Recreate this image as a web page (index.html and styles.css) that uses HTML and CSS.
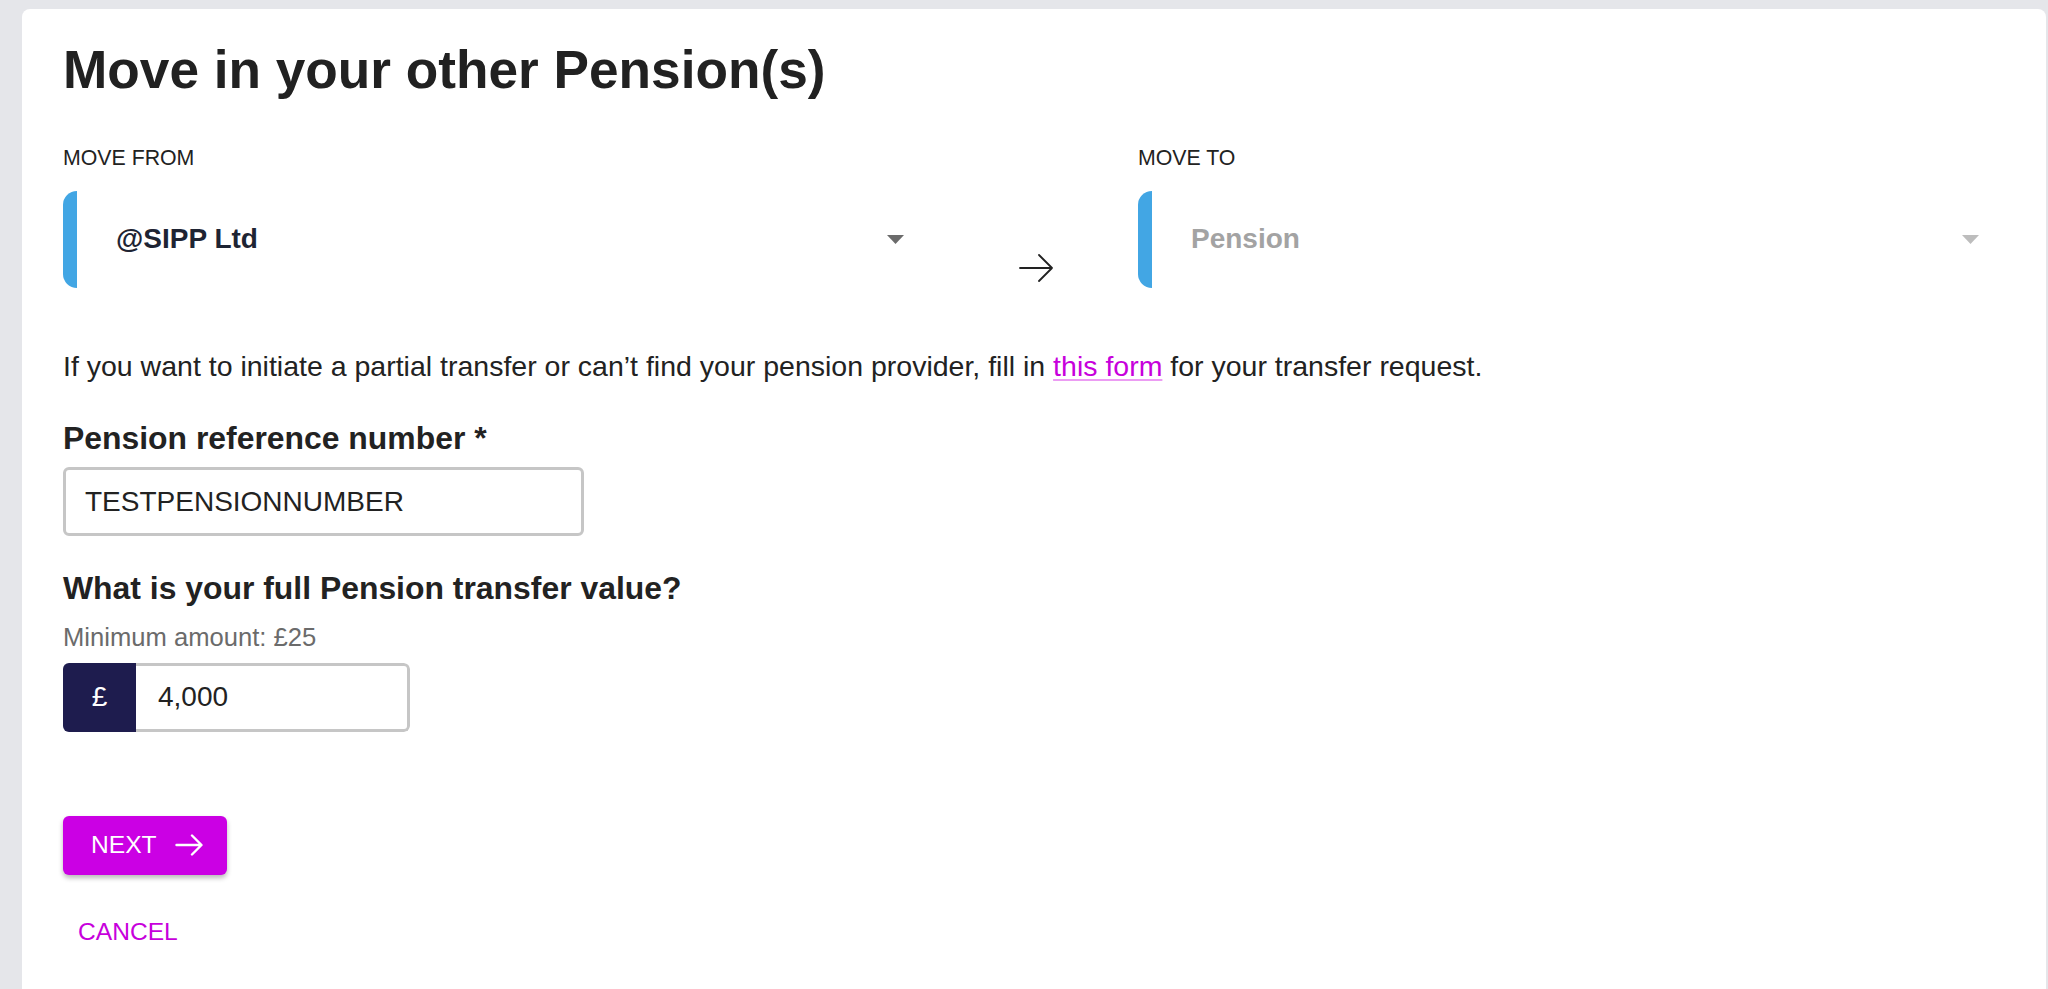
FILE: index.html
```html
<!DOCTYPE html>
<html lang="en">
<head>
<meta charset="utf-8">
<title>Move in your other Pension(s)</title>
<link rel="stylesheet" href="styles.css">
</head>
<body>
<main class="card">
  <h1 class="title">Move in your other Pension(s)</h1>

  <div class="transfer">
    <div class="transfer-col">
      <div class="col-label">Move from</div>
      <div class="select">
        <span class="select-value">@SIPP Ltd</span>
        <svg class="caret" width="17" height="9" viewBox="0 0 17 9"><path d="M0 0H17L8.5 9Z" fill="#6b6b6b"/></svg>
      </div>
    </div>
    <div class="transfer-arrow">
      <svg width="35" height="30" viewBox="0 0 35 30"><path d="M1 15H33M20 2L33 15L20 28" fill="none" stroke="#222" stroke-width="1.8" stroke-linecap="round" stroke-linejoin="round"/></svg>
    </div>
    <div class="transfer-col">
      <div class="col-label">Move to</div>
      <div class="select select-disabled">
        <span class="select-value">Pension</span>
        <svg class="caret" width="17" height="9" viewBox="0 0 17 9"><path d="M0 0H17L8.5 9Z" fill="#bdbdbd"/></svg>
      </div>
    </div>
  </div>

  <p class="note">If you want to initiate a partial transfer or can’t find your pension provider, fill in <a class="link" href="#">this form</a> for your transfer request.</p>

  <div class="field">
    <div class="field-label">Pension reference number *</div>
    <div class="text-input">TESTPENSIONNUMBER</div>
  </div>

  <div class="field">
    <div class="field-label">What is your full Pension transfer value?</div>
    <div class="hint">Minimum amount: £25</div>
    <div class="money-input">
      <span class="money-prefix">£</span>
      <span class="money-value">4,000</span>
    </div>
  </div>

  <div class="actions">
    <button class="btn-next" type="button">
      <span>NEXT</span>
      <svg width="28" height="22" viewBox="0 0 28 22"><path d="M1.5 11H26M17 1.5L26.5 11L17 20.5" fill="none" stroke="#fff" stroke-width="2.4" stroke-linecap="round" stroke-linejoin="round"/></svg>
    </button>
    <button class="btn-cancel" type="button">CANCEL</button>
  </div>
</main>
</body>
</html>
```

FILE: styles.css
```css
html, body {
  margin: 0;
  padding: 0;
  background: #e5e6ea;
  height: 100%;
}

body {
  font-family: "Liberation Sans", Arial, Helvetica, sans-serif;
  color: #222222;
  overflow: hidden;
}

.card {
  margin: 9px 2px 0 22px;
  background: #ffffff;
  border-radius: 8px 8px 0 0;
  padding: 29px 41px 40px 41px;
  min-height: 1000px;
  box-sizing: border-box;
}

.title {
  margin: 0;
  font-size: 53.2px;
  line-height: 63.6px;
  font-weight: 700;
  color: #212121;
}

.transfer {
  margin-top: 44px;
  display: grid;
  grid-template-columns: 1fr 208px 1fr;
  align-items: end;
}

.col-label {
  font-size: 21.3px;
  line-height: 25.6px;
  text-transform: uppercase;
  color: #222222;
}

.select {
  margin-top: 19.5px;
  height: 97px;
  box-sizing: border-box;
  display: flex;
  align-items: center;
  justify-content: space-between;
  border-left: 14px solid #42a6e4;
  border-radius: 14px 0 0 14px;
  padding: 0 26px 0 39px;
}

.select-value {
  font-size: 28px;
  font-weight: 700;
  color: #1e2433;
}

.select-disabled .select-value {
  color: #a3a3a3;
}

.caret {
  display: block;
}

.transfer-arrow {
  display: flex;
  justify-content: center;
  padding: 0 0 5px 4px;
}

.transfer-arrow svg {
  display: block;
}

.note {
  margin: 57px 0 0 0;
  font-size: 28.5px;
  line-height: 42.6px;
  color: #222222;
}

.link {
  color: #c700dc;
  text-decoration: underline;
  text-decoration-color: #ec9cf3;
  text-underline-offset: 3px;
}

.field {
  margin-top: 32px;
}

.field + .field {
  margin-top: 33px;
}

.field-label {
  font-size: 31.9px;
  line-height: 38px;
  font-weight: 700;
  color: #222222;
}

.text-input {
  margin-top: 10px;
  width: 521px;
  height: 69px;
  box-sizing: border-box;
  border: 3px solid #c6c6c6;
  border-radius: 6px;
  padding-left: 19px;
  display: flex;
  align-items: center;
  font-size: 28px;
  color: #222222;
}

.hint {
  margin-top: 15px;
  font-size: 25.6px;
  line-height: 30.7px;
  color: #6b6b6b;
}

.money-input {
  margin-top: 10px;
  width: 347px;
  height: 69px;
  display: flex;
  border-radius: 6px;
  overflow: hidden;
}

.money-prefix {
  width: 73px;
  flex: none;
  background: #1e1c4e;
  color: #ffffff;
  font-size: 28px;
  display: flex;
  align-items: center;
  justify-content: center;
}

.money-value {
  flex: 1;
  box-sizing: border-box;
  border: 3px solid #c6c6c6;
  border-left: none;
  border-radius: 0 6px 6px 0;
  padding-left: 22px;
  display: flex;
  align-items: center;
  font-size: 28px;
  color: #222222;
}

.actions {
  margin-top: 84px;
  display: flex;
  flex-direction: column;
  align-items: flex-start;
  gap: 28px;
}

.btn-next {
  height: 59px;
  display: flex;
  align-items: center;
  gap: 18px;
  padding: 0 24px 0 28px;
  border: none;
  border-radius: 6px;
  background: #cb00e4;
  color: #ffffff;
  font-family: "Liberation Sans", Arial, sans-serif;
  font-size: 24.6px;
  box-shadow: 0 3px 5px rgba(0, 0, 0, 0.28);
}

.btn-next svg {
  display: block;
}

.btn-cancel {
  height: 59px;
  padding: 0 15px;
  border: none;
  background: transparent;
  color: #c700dc;
  font-family: "Liberation Sans", Arial, sans-serif;
  font-size: 24.6px;
}
```
